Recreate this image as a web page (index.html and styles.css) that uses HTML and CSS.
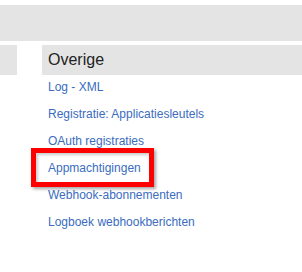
FILE: index.html
```html
<!DOCTYPE html>
<html>
<head>
	<title>Overige</title>
	<link rel="stylesheet" href="styles.css">
</head>
<body>
	<div class="topbar"></div>

	<div class="row">
		<div class="side"></div>
		<div class="panel">
			<div class="panel-title">Overige</div>
			<ul class="links">
				<li><a href="#">Log - XML</a></li>
				<li><a href="#">Registratie: Applicatiesleutels</a></li>
				<li><a href="#">OAuth registraties</a></li>
				<li class="marked"><a href="#">Appmachtigingen</a></li>
				<li><a href="#">Webhook-abonnementen</a></li>
				<li><a href="#">Logboek webhookberichten</a></li>
			</ul>
		</div>
	</div>
</body>
</html>
```

FILE: styles.css
```css
body{
	margin: 0;
	font-family: "Liberation Sans", Arial, sans-serif;
	background: #fff;
}

.topbar{
	margin-top: 5px;
	height: 36px;
	background: #e4e4e4;
}

.row{
	display: flex;
	margin-top: 4px;
	gap: 25px;
}

.side{
	width: 17px;
	height: 30px;
	background: #e4e4e4;
}

.panel{
	flex: 1;
}

.panel-title{
	height: 30px;
	line-height: 30px;
	padding-left: 6px;
	font-size: 16px;
	color: #222;
	background: #e4e4e4;
}

.links{
	list-style: none;
	margin: -1px 0 0;
	padding: 0 0 0 6px;
}

.links li{
	height: 27px;
	line-height: 27px;
	font-size: 12px;
}

.links a{
	color: #3a6cc0;
	text-decoration: none;
}

.marked{
	position: relative;
}

.marked::before{
	content: "";
	position: absolute;
	left: -17px;
	top: -7px;
	width: 113px;
	height: 29px;
	border: 5px solid #f00;
	box-shadow: 2px 2px 3px rgba(0,0,0,.35), inset 2px 2px 3px rgba(0,0,0,.2);
}
```
